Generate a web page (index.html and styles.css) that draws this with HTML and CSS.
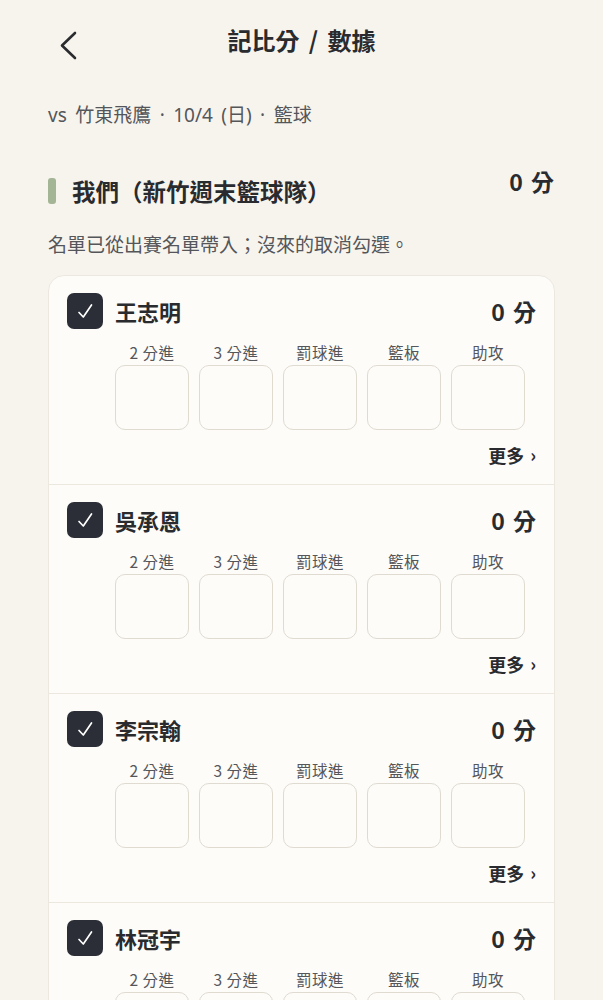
FILE: index.html
```html
<!DOCTYPE html>
<html lang="zh-Hant">
<head>
<meta charset="utf-8">
<title>記比分 / 數據</title>
<link rel="stylesheet" href="styles.css">
</head>
<body>
<div class="page">
  <header class="topbar">
    <button class="back" aria-label="返回">
      <svg width="20" height="30" viewBox="0 0 20 30"><path d="M17 2 L4 14.5 L17 27" fill="none" stroke="#2a2b2e" stroke-width="2.6" stroke-linecap="round" stroke-linejoin="round"/></svg>
    </button>
    <h1 class="title">記比分 / 數據</h1>
  </header>

  <p class="meta">vs 竹東飛鷹 · 10/4 (日) · 籃球</p>

  <div class="team-head">
    <div class="team-name"><span class="bar"></span>我們（新竹週末籃球隊）</div>
    <div class="team-score">0 分</div>
  </div>

  <p class="note">名單已從出賽名單帶入；沒來的取消勾選。</p>

  <div class="card">
    <div class="player">
      <div class="p-head">
        <span class="check"><svg width="20" height="20" viewBox="0 0 20 20"><path d="M4 11.5 L8.3 16 L16.5 4" fill="none" stroke="#fff" stroke-width="1.7" stroke-linecap="round" stroke-linejoin="round"/></svg></span>
        <span class="p-name">王志明</span>
        <span class="p-score">0 分</span>
      </div>
      <div class="stats">
        <div class="stat"><span class="lbl">2 分進</span><span class="box"></span></div>
        <div class="stat"><span class="lbl">3 分進</span><span class="box"></span></div>
        <div class="stat"><span class="lbl">罰球進</span><span class="box"></span></div>
        <div class="stat"><span class="lbl">籃板</span><span class="box"></span></div>
        <div class="stat"><span class="lbl">助攻</span><span class="box"></span></div>
      </div>
      <div class="more">更多<span class="chev">›</span></div>
    </div>

    <div class="player">
      <div class="p-head">
        <span class="check"><svg width="20" height="20" viewBox="0 0 20 20"><path d="M4 11.5 L8.3 16 L16.5 4" fill="none" stroke="#fff" stroke-width="1.7" stroke-linecap="round" stroke-linejoin="round"/></svg></span>
        <span class="p-name">吳承恩</span>
        <span class="p-score">0 分</span>
      </div>
      <div class="stats">
        <div class="stat"><span class="lbl">2 分進</span><span class="box"></span></div>
        <div class="stat"><span class="lbl">3 分進</span><span class="box"></span></div>
        <div class="stat"><span class="lbl">罰球進</span><span class="box"></span></div>
        <div class="stat"><span class="lbl">籃板</span><span class="box"></span></div>
        <div class="stat"><span class="lbl">助攻</span><span class="box"></span></div>
      </div>
      <div class="more">更多<span class="chev">›</span></div>
    </div>

    <div class="player">
      <div class="p-head">
        <span class="check"><svg width="20" height="20" viewBox="0 0 20 20"><path d="M4 11.5 L8.3 16 L16.5 4" fill="none" stroke="#fff" stroke-width="1.7" stroke-linecap="round" stroke-linejoin="round"/></svg></span>
        <span class="p-name">李宗翰</span>
        <span class="p-score">0 分</span>
      </div>
      <div class="stats">
        <div class="stat"><span class="lbl">2 分進</span><span class="box"></span></div>
        <div class="stat"><span class="lbl">3 分進</span><span class="box"></span></div>
        <div class="stat"><span class="lbl">罰球進</span><span class="box"></span></div>
        <div class="stat"><span class="lbl">籃板</span><span class="box"></span></div>
        <div class="stat"><span class="lbl">助攻</span><span class="box"></span></div>
      </div>
      <div class="more">更多<span class="chev">›</span></div>
    </div>

    <div class="player">
      <div class="p-head">
        <span class="check"><svg width="20" height="20" viewBox="0 0 20 20"><path d="M4 11.5 L8.3 16 L16.5 4" fill="none" stroke="#fff" stroke-width="1.7" stroke-linecap="round" stroke-linejoin="round"/></svg></span>
        <span class="p-name">林冠宇</span>
        <span class="p-score">0 分</span>
      </div>
      <div class="stats">
        <div class="stat"><span class="lbl">2 分進</span><span class="box"></span></div>
        <div class="stat"><span class="lbl">3 分進</span><span class="box"></span></div>
        <div class="stat"><span class="lbl">罰球進</span><span class="box"></span></div>
        <div class="stat"><span class="lbl">籃板</span><span class="box"></span></div>
        <div class="stat"><span class="lbl">助攻</span><span class="box"></span></div>
      </div>
      <div class="more">更多<span class="chev">›</span></div>
    </div>
  </div>
</div>
</body>
</html>
```

FILE: styles.css
```css
* { box-sizing: border-box; }
html, body {
  margin: 0;
  padding: 0;
  background: #f7f4ee;
}
body {
  font-family: "Noto Sans CJK TC", "Noto Sans", sans-serif;
  color: #2a2b2e;
}
.page {
  padding: 0 48px 40px 48px;
}
.topbar {
  height: 84px;
  display: flex;
  align-items: center;
  justify-content: center;
  position: relative;
}
.back {
  position: absolute;
  left: 10px;
  top: 31px;
  border: 0;
  padding: 0;
  background: none;
  width: 20px;
  height: 30px;
}
.back svg { display: block; }
.title {
  margin: 0;
  font-size: 24px;
  font-weight: 700;
  line-height: 32px;
  margin-top: -5px;
  word-spacing: 4px;
  color: #2a2b2e;
}
.meta {
  margin: 19px 0 0 0;
  font-family: "Noto Sans", "Noto Sans CJK TC", sans-serif;
  font-size: 19px;
  line-height: 24px;
  word-spacing: 3.5px;
  color: #55565a;
}
.team-head {
  margin-top: 39px;
  display: flex;
  justify-content: space-between;
  align-items: flex-start;
}
.team-name {
  display: flex;
  align-items: center;
  font-size: 23.5px;
  font-weight: 700;
  line-height: 30px;
  margin-top: 10px;
}
.bar {
  width: 8px;
  height: 26px;
  border-radius: 3px;
  background: #a4b595;
  margin-right: 16px;
}
.team-score {
  font-size: 23px;
  font-weight: 700;
  line-height: 30px;
  word-spacing: 3px;
  margin-right: 1px;
}
.note {
  margin: 26px 0 0 0;
  font-size: 19px;
  line-height: 24px;
  color: #55565a;
}
.card {
  margin-top: 19px;
  background: #fdfcf9;
  border: 1px solid #ece8e0;
  border-radius: 16px;
  overflow: hidden;
}
.player {
  padding: 17px 18px 17px 18px;
  border-bottom: 1px solid #ece8e0;
}
.player:last-child { border-bottom: 0; }
.p-head {
  display: flex;
  align-items: center;
  height: 36px;
}
.check {
  width: 36px;
  height: 36px;
  border-radius: 7px;
  background: #2b2e36;
  display: flex;
  align-items: center;
  justify-content: center;
  margin-right: 12px;
}
.check svg { display: block; }
.p-name {
  font-size: 22px;
  font-weight: 700;
  flex: 1;
}
.p-score {
  font-size: 23px;
  font-weight: 700;
  word-spacing: 3px;
}
.stats {
  display: grid;
  grid-template-columns: repeat(5, 74px);
  column-gap: 10px;
  margin-left: 48px;
  margin-top: 13px;
}
.stat {
  display: flex;
  flex-direction: column;
  align-items: center;
}
.lbl {
  font-size: 15.5px;
  line-height: 20px;
  color: #55565a;
  letter-spacing: 0.5px;
  margin-bottom: 3px;
}
.box {
  width: 74px;
  height: 65px;
  border: 1.5px solid #e0dbd1;
  border-radius: 10px;
  background: #fdfcf9;
}
.more {
  margin-top: 13px;
  text-align: right;
  font-size: 18px;
  font-weight: 700;
  line-height: 24px;
}
.chev {
  font-size: 18px;
  font-weight: 700;
  margin-left: 6px;
  position: relative;
  top: -1px;
}
```
